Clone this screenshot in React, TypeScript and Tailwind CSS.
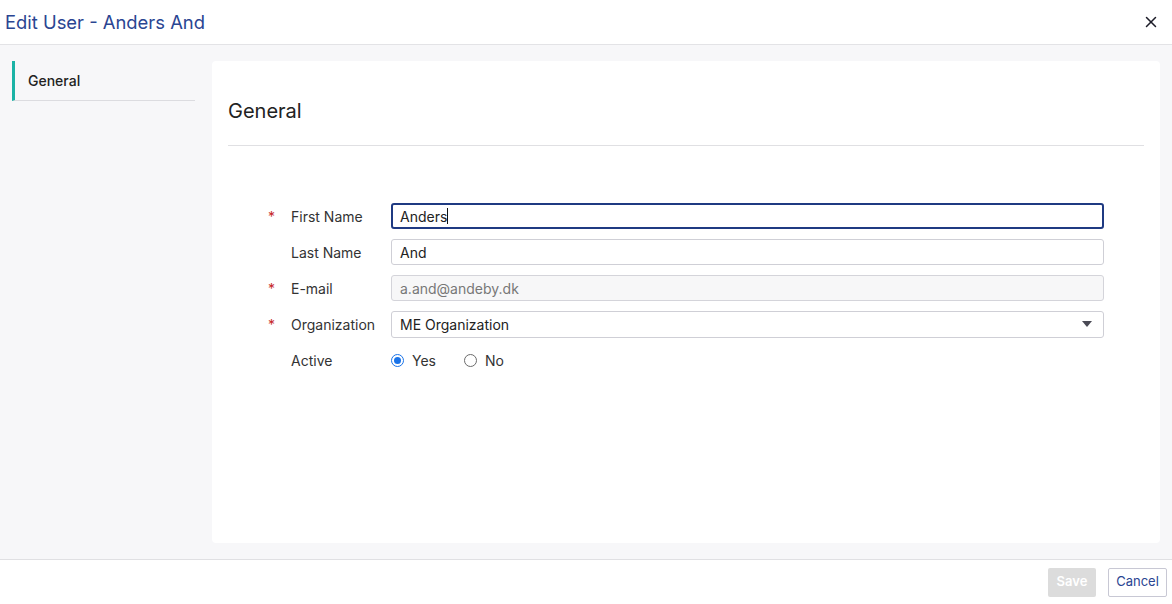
import { X } from 'lucide-react';

interface FieldRowProps {
  label: string;
  required?: boolean;
  children: React.ReactNode;
}

function FieldRow({ label, required = false, children }: FieldRowProps) {
  return (
    <div className="flex items-center h-[26px] mb-[10px]">
      <div className="w-[63px] pr-[16px] text-right text-[14px] text-[#c62828] leading-none pt-[2px]">
        {required ? '*' : ''}
      </div>
      <div className="w-[100px] text-[14px] text-[#333]">{label}</div>
      <div className="flex-1 mr-[40px]">{children}</div>
    </div>
  );
}

export default function App() {
  return (
    <div className="h-[604px] w-full flex flex-col bg-white font-['Inter','Noto_Sans',sans-serif] text-[#222]">
      {/* header */}
      <div className="h-[45px] shrink-0 border-b border-[#e3e3e6] flex items-center justify-between pl-[5px] pr-[8px]">
        <div className="text-[18.4px] text-[#2a4592] leading-none pt-[1px]">Edit User - Anders And</div>
        <button className="p-1 text-[#1c1c28]">
          <X size={18} strokeWidth={2} />
        </button>
      </div>

      {/* body */}
      <div className="flex-1 bg-[#f7f7f9] flex pl-3 pr-3 py-4 gap-[17px] min-h-0">
        <div className="w-[183px] shrink-0">
          <div className="h-[40px] flex items-center pl-[13px] border-l-[3px] border-l-[#1bb3a6] border-b border-b-[#dcdce0] text-[14px] font-medium text-[#222]">
            General
          </div>
        </div>

        <div className="flex-1 bg-white rounded-[4px] px-4">
          <div className="pt-[38px] text-[20px] leading-[24px] text-[#222]">General</div>
          <div className="mt-[22px] border-t border-[#e0e0e3]" />

          <div className="pt-[57px]">
            <FieldRow label="First Name" required>
              <div className="h-[26px] border-2 border-[#1f3a82] rounded-[3px] px-[7px] flex items-center text-[14px] text-[#222]">
                Anders<span className="w-px h-[16px] bg-[#111]" />
              </div>
            </FieldRow>
            <FieldRow label="Last Name">
              <div className="h-[26px] border border-[#cfcfd6] rounded-[3px] px-[8px] flex items-center text-[14px] text-[#222]">
                And
              </div>
            </FieldRow>
            <FieldRow label="E-mail" required>
              <div className="h-[26px] border border-[#d4d4da] bg-[#f7f7f8] rounded-[3px] px-[8px] flex items-center text-[14px] text-[#777]">
                a.and@andeby.dk
              </div>
            </FieldRow>
            <FieldRow label="Organization" required>
              <div className="h-[27px] border border-[#cfcfd6] rounded-[3px] pl-[8px] pr-[11px] flex items-center justify-between text-[14px] text-[#222]">
                <span>ME Organization</span>
                <svg width="10" height="6" viewBox="0 0 10 6">
                  <path d="M0 0h10L5 6z" fill="#4a4a55" />
                </svg>
              </div>
            </FieldRow>
            <div className="flex items-center h-[26px]">
              <div className="w-[63px]" />
              <div className="w-[100px] text-[14px] text-[#333]">Active</div>
              <label className="flex items-center gap-[8px] text-[14px] text-[#333]">
                <span className="w-[13px] h-[13px] rounded-full border-[1.5px] border-[#1a73e8] flex items-center justify-center">
                  <span className="w-[7px] h-[7px] rounded-full bg-[#1a73e8]" />
                </span>
                Yes
              </label>
              <label className="flex items-center gap-[8px] text-[14px] text-[#333] ml-[28px]">
                <span className="w-[13px] h-[13px] rounded-full border border-[#6b6b6b]" />
                No
              </label>
            </div>
          </div>
        </div>
      </div>

      {/* footer */}
      <div className="h-[45px] shrink-0 border-t border-[#e0e0e3] flex items-center justify-end pr-[5px] gap-[12px]">
        <button className="w-[48px] h-[29px] rounded-[2px] bg-[#dcdcdc] text-white text-[13px] font-semibold">
          Save
        </button>
        <button className="w-[59px] h-[29px] rounded-[2px] border border-[#c8c8d4] bg-white text-[#2a4592] text-[13px]">
          Cancel
        </button>
      </div>
    </div>
  );
}
